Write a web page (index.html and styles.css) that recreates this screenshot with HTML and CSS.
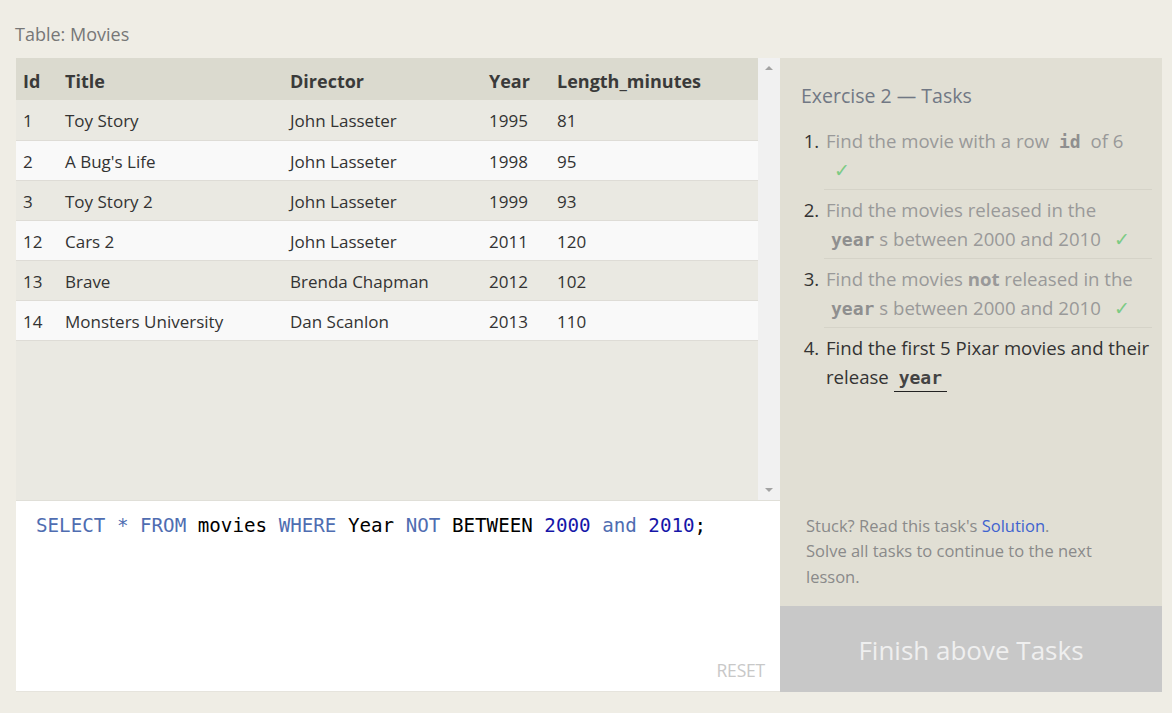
FILE: index.html
```html
<!DOCTYPE html>
<html lang="en">
<head>
<meta charset="utf-8">
<title>SQL Lesson - Movies</title>
<link rel="stylesheet" href="styles.css">
</head>
<body>
<div class="page">
  <div class="table-label">Table: Movies</div>
  <div class="workspace">
    <div class="left">
      <div class="results">
        <div class="table-scroll">
          <table class="movies">
            <thead>
              <tr><th class="c-id">Id</th><th class="c-title">Title</th><th class="c-dir">Director</th><th class="c-year">Year</th><th>Length_minutes</th></tr>
            </thead>
            <tbody>
              <tr><td>1</td><td>Toy Story</td><td>John Lasseter</td><td>1995</td><td>81</td></tr>
              <tr><td>2</td><td>A Bug's Life</td><td>John Lasseter</td><td>1998</td><td>95</td></tr>
              <tr><td>3</td><td>Toy Story 2</td><td>John Lasseter</td><td>1999</td><td>93</td></tr>
              <tr><td>12</td><td>Cars 2</td><td>John Lasseter</td><td>2011</td><td>120</td></tr>
              <tr><td>13</td><td>Brave</td><td>Brenda Chapman</td><td>2012</td><td>102</td></tr>
              <tr><td>14</td><td>Monsters University</td><td>Dan Scanlon</td><td>2013</td><td>110</td></tr>
            </tbody>
          </table>
        </div>
        <div class="scrollbar">
          <span class="arrow up"></span>
          <span class="arrow down"></span>
        </div>
      </div>
      <div class="editor">
        <pre class="code"><span class="kw">SELECT</span> <span class="kw">*</span> <span class="kw">FROM</span> movies <span class="kw">WHERE</span> Year <span class="kw">NOT</span> BETWEEN <span class="num">2000</span> <span class="kw">and</span> <span class="num">2010</span>;</pre>
        <div class="reset">RESET</div>
      </div>
    </div>
    <div class="right">
      <div class="tasks">
        <h2 class="tasks-title">Exercise 2 — Tasks</h2>
        <ol class="task-list">
          <li class="done"><span class="t">Find the movie with a row <code>id</code> of 6 <span class="check">✓</span></span></li>
          <li class="done"><span class="t">Find the movies released in the <code>year</code>s between 2000 and 2010 <span class="check">✓</span></span></li>
          <li class="done"><span class="t">Find the movies <b>not</b> released in the <code>year</code>s between 2000 and 2010 <span class="check">✓</span></span></li>
          <li class="active"><span class="t">Find the first 5 Pixar movies and their release <code class="u">year</code></span></li>
        </ol>
        <div class="help">
          <p>Stuck? Read this task's <a href="#">Solution</a>.</p>
          <p>Solve all tasks to continue to the next lesson.</p>
        </div>
      </div>
      <div class="finish">Finish above Tasks</div>
    </div>
  </div>
</div>
</body>
</html>
```
FILE: styles.css
```css
* { box-sizing: border-box; }
html, body { margin: 0; padding: 0; }
body {
  background: #efede5;
  font-family: "Open Sans", "Liberation Sans", sans-serif;
  color: #333;
}
.page {
  padding: 21px 10px 21px 16px;
}
.table-label {
  font-size: 18px;
  line-height: 26px;
  color: #777;
  margin-left: -1px;
  margin-bottom: 11px;
}
.workspace {
  display: grid;
  grid-template-columns: 764px 382px;
  height: 634px;
}
.left {
  display: flex;
  flex-direction: column;
}
.results {
  height: 443px;
  display: flex;
  background: #eae9e2;
  border-bottom: 1px solid #e0dfd8;
}
.table-scroll {
  flex: 1;
}
.movies {
  width: 100%;
  border-collapse: collapse;
  font-size: 17px;
}
.movies th {
  background: #dbdacf;
  text-align: left;
  font-weight: 700;
  font-size: 18px;
  height: 42px;
  padding: 3px 7px 0;
  color: #3a3a3a;
}
.movies td {
  height: 40px;
  padding: 2px 7px 0;
  border-bottom: 1px solid #dedcd6;
  color: #333;
}
.movies tbody tr:nth-child(odd) td { background: #eae9e2; }
.movies tbody tr:nth-child(even) td { background: #f9f9f9; }
.c-id { width: 42px; }
.c-title { width: 225px; }
.c-dir { width: 199px; }
.c-year { width: 68px; }
.scrollbar {
  width: 22px;
  background: #f1f1f1;
  display: flex;
  flex-direction: column;
  justify-content: space-between;
  align-items: center;
  padding: 8px 0 8px;
}
.arrow {
  width: 0; height: 0;
  border-left: 4px solid transparent;
  border-right: 4px solid transparent;
}
.arrow.up { border-bottom: 4px solid #a3a3a3; }
.arrow.down { border-top: 4px solid #a3a3a3; }
.editor {
  flex: 1;
  background: #fff;
  display: flex;
  flex-direction: column;
  justify-content: space-between;
  padding: 12px 15px 9px 20px;
  border-bottom: 1px solid #e6e4dd;
}
.code {
  margin: 0;
  font-family: "DejaVu Sans Mono", "Liberation Mono", monospace;
  font-size: 19.2px;
  line-height: 26px;
  color: #000;
}
.kw { color: #4f6db1; }
.num { color: #1616a8; }
.reset {
  align-self: flex-end;
  font-size: 17.5px;
  color: #c8c8c8;
  letter-spacing: -0.2px;
}
.right {
  display: flex;
  flex-direction: column;
}
.tasks {
  flex: 1;
  background: #e1dfd4;
  padding: 24px 10px 17px 21px;
  display: flex;
  flex-direction: column;
}
.tasks-title {
  margin: 0;
  font-size: 19.5px;
  font-weight: 400;
  line-height: 28px;
  color: #717884;
}
.task-list {
  margin: 11px 0 0 0;
  padding: 0 0 0 23px;
  font-size: 18.6px;
  line-height: 29px;
  flex: 1;
}
.task-list li {
  padding: 5px 0 5px 2px;
  border-bottom: 1px solid #d5d3c8;
  color: #333;
}
.task-list li.active { border-bottom: none; }
.task-list li.done .t { color: #999; }
.task-list code {
  font-family: "DejaVu Sans Mono", "Liberation Mono", monospace;
  font-weight: 700;
  font-size: 18px;
  line-height: 1;
  padding: 0 5px;
}
.task-list li.done code { color: #8f8f8f; }
.task-list code.u {
  padding: 0 5px 3px;
  border-bottom: 1px solid #222;
  color: #444;
}
.check { color: #7ccb84; margin-left: 8px; line-height: 1; }
.help {
  font-size: 16.5px;
  line-height: 25.5px;
  color: #8a8a8a;
  padding-left: 5px;
  padding-right: 36px;
}
.help p { margin: 0; }
.help a { color: #3f63cf; text-decoration: none; }
.finish {
  height: 86px;
  background: #c8c8c8;
  color: #efefef;
  font-size: 26px;
  display: flex;
  align-items: center;
  justify-content: center;
  padding-top: 2px;
}
```
